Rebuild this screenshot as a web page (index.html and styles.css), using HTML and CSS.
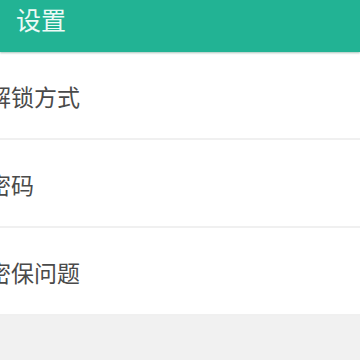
FILE: index.html
```html
<!DOCTYPE html>
<html lang="zh-CN">
<head>
    <meta charset="UTF-8">
    <meta name="viewport" content="width=device-width, initial-scale=1.0">
    <title>设置</title>
    <link rel="stylesheet" href="styles.css">
</head>
<body>
    <div class="header">
        <span class="header-title">设置</span>
    </div>

    <!-- Settings list -->
    <div class="settings-list">
        <div class="setting-item">
            <span class="setting-label">解锁方式</span>
        </div>
        <div class="setting-item">
            <span class="setting-label">密码</span>
        </div>
        <div class="setting-item">
            <span class="setting-label">密保问题</span>
        </div>
    </div>
</body>
</html>
```

FILE: styles.css
```css
body {
    margin: 0;
    background-color: #f1f1f1;
    font-family: "Noto Sans CJK SC", "Noto Sans", sans-serif;
    overflow: hidden;
}
.header {
    height: 52px;
    background-color: #22b394;
    box-shadow: 0 1px 2px rgba(0, 80, 60, 0.35);
    position: relative;
    z-index: 1;
}
.header-title {
    display: block;
    padding-left: 16px;
    font-size: 25px;
    line-height: 38px;
    color: #eefaf6;
}
.settings-list {
    background-color: #fff;
}
.setting-item {
    height: 86px;
    display: flex;
    align-items: center;
    border-bottom: 2px solid #f0f0f0;
}
.setting-label {
    margin-left: -12px;
    padding-top: 1px;
    font-size: 23px;
    color: #4a4a4a;
    white-space: nowrap;
}
```
